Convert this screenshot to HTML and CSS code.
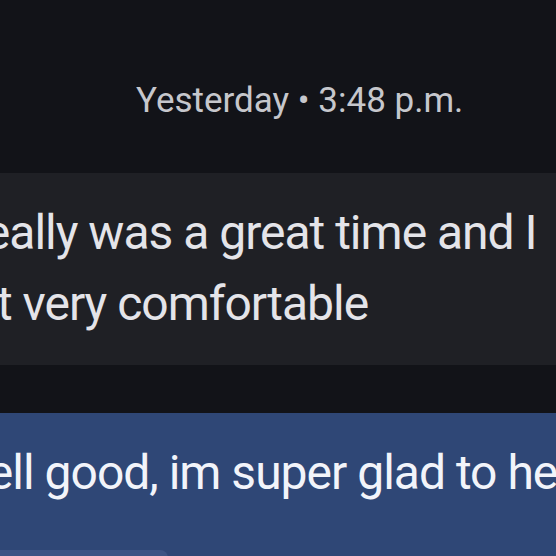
FILE: index.html
```html
<!DOCTYPE html>
<html>
<head>
<meta charset="utf-8">
<link rel="stylesheet" href="styles.css">
</head>
<body>
<div class="chat">
  <div class="stamp">Yesterday • 3:48 p.m.</div>
  <div class="bubble incoming">
    <p class="msg">really was a great time and I<br>not very comfortable</p>
  </div>
  <div class="bubble outgoing">
    <p class="msg">Well good, im super glad to hear</p>
    <div class="chip"></div>
  </div>
</div>
</body>
</html>
```
FILE: styles.css
```css
html, body {
  margin: 0;
  padding: 0;
  width: 556px;
  height: 556px;
  overflow: hidden;
  background: #121318;
}
.chat {
  display: flex;
  flex-direction: column;
  font-family: Roboto, "Noto Sans", sans-serif;
}
.stamp {
  padding-top: 79px;
  padding-left: 136px;
  font-size: 35px;
  line-height: 44px;
  color: #c6c7cc;
  white-space: nowrap;
}
.bubble {
  white-space: nowrap;
  box-sizing: border-box;
  padding-top: 24px;
}
.msg {
  margin: 0;
  font-size: 48px;
  line-height: 71px;
  letter-spacing: -1px;
}
.incoming {
  margin-top: 50px;
  height: 192px;
  background: #1f2025;
}
.incoming .msg {
  margin-left: -55px;
  text-indent: 25px;
  color: #e4e4e9;
}
.outgoing {
  margin-top: 48px;
  height: 200px;
  background: #2f4776;
}
.outgoing .msg {
  margin-left: -53px;
  color: #f2f4fa;
}
.chip {
  margin-top: 42px;
  width: 168px;
  height: 20px;
  border-radius: 0 8px 0 0;
  background: #3d5484;
}
```
